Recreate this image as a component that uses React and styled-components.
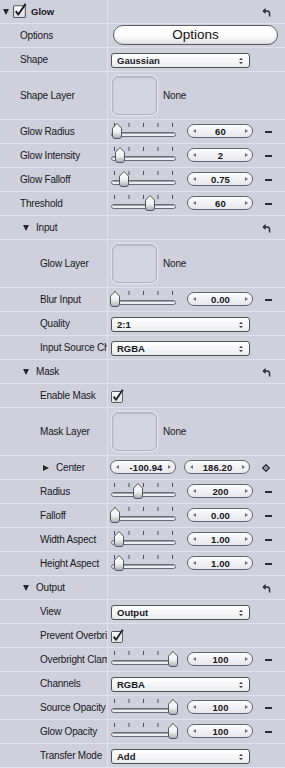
import React, { useId } from "react";
import styled, { createGlobalStyle } from "styled-components";

const GlobalStyle = createGlobalStyle`
  html, body { margin: 0; padding: 0; background: #cfd0db; }
  body { font-family: "Liberation Sans", Arial, sans-serif; }
`;

const Panel = styled.div`
  width: 285px;
  background: #cfd0db;
  color: #18181e;
  font-size: 10px;
  letter-spacing: -0.2px;
`;

const Row = styled.div`
  display: flex;
  height: ${(p) => p.$h || 24}px;
  box-sizing: border-box;
  border-bottom: 1px solid #e2e3ea;
`;

const LabelCell = styled.div`
  width: 108px;
  flex: none;
  box-sizing: border-box;
  border-right: 1px solid #e2e3ea;
  padding-left: ${(p) => p.$indent || 0}px;
  display: flex;
  align-items: center;
  white-space: nowrap;
  overflow: hidden;
`;

const LabelText = styled.span`
  flex: 1;
  min-width: 0;
  overflow: hidden;
  white-space: nowrap;
  text-overflow: clip;
`;

const ControlCell = styled.div`
  flex: 1;
  min-width: 0;
  display: flex;
  align-items: center;
  padding-left: 3px;
`;

const DownTri = styled.span`
  width: 0;
  height: 0;
  flex: none;
  border-left: 3.5px solid transparent;
  border-right: 3.5px solid transparent;
  border-top: 6px solid #26262c;
  margin-right: ${(p) => p.$gap || 7}px;
`;

const RightTri = styled.span`
  width: 0;
  height: 0;
  flex: none;
  border-top: 3.5px solid transparent;
  border-bottom: 3.5px solid transparent;
  border-left: 6px solid #26262c;
  margin-right: 7px;
`;

const HeaderTitle = styled.span`
  font-weight: ${(p) => (p.$bold ? 700 : 400)};
  font-size: ${(p) => (p.$bold ? "9.5px" : "10px")};
  letter-spacing: ${(p) => (p.$bold ? "0" : "-0.2px")};
`;

const ResetWrap = styled.span`
  margin-left: auto;
  margin-right: 14px;
  display: flex;
  margin-top: 2px;
`;

const OptionsButton = styled.div`
  width: 165px;
  height: 20px;
  box-sizing: border-box;
  margin-left: 2px;
  margin-top: -2px;
  border: 1px solid #5e5f68;
  border-radius: 10px;
  background: linear-gradient(#ffffff 0%, #fbfbfb 55%, #e4e4e8 100%);
  box-shadow: inset 0 -1px 1px rgba(0, 0, 0, 0.08);
  display: flex;
  align-items: center;
  justify-content: center;
  font-size: 13.5px;
  letter-spacing: 0;
  color: #111;
`;

const Select = styled.div`
  width: 139px;
  height: 15px;
  box-sizing: border-box;
  margin-top: 2px;
  border: 1px solid #50515a;
  border-radius: 3px;
  background: linear-gradient(#ffffff, #ececf0);
  display: flex;
  align-items: center;
  padding-left: 5px;
  font-weight: 700;
  font-size: 9.5px;
  letter-spacing: 0;
`;

const SelectArrows = styled.span`
  margin-left: auto;
  margin-right: 6px;
  display: flex;
  flex-direction: column;
  gap: 2px;
`;

const UpArrow = styled.span`
  width: 0;
  height: 0;
  border-left: 2px solid transparent;
  border-right: 2px solid transparent;
  border-bottom: 2.5px solid #3a3a40;
`;

const DownArrow = styled.span`
  width: 0;
  height: 0;
  border-left: 2px solid transparent;
  border-right: 2px solid transparent;
  border-top: 2.5px solid #3a3a40;
`;

const Well = styled.div`
  width: 45px;
  height: 39px;
  box-sizing: border-box;
  margin-left: 1px;
  border: 1px solid #b2b3c0;
  border-radius: 6px;
  background: #d4d5df;
  box-shadow: 0 0 0 1.5px #dfe0e8, inset 0 1px 2px rgba(0, 0, 0, 0.12);
`;

const NoneText = styled.span`
  margin-left: 6px;
`;

const Field = styled.div`
  width: 66px;
  height: 14px;
  box-sizing: border-box;
  flex: none;
  margin-left: ${(p) => p.$ml || 0}px;
  margin-top: -1px;
  border: 1px solid #62636c;
  border-radius: 7px;
  background: linear-gradient(#fcfcfd, #e6e6ec);
  display: flex;
  align-items: center;
  padding: 0 4px 0 5px;
`;

const FieldLeft = styled.span`
  width: 0;
  height: 0;
  flex: none;
  border-top: 2.5px solid transparent;
  border-bottom: 2.5px solid transparent;
  border-right: 3.5px solid #6f7078;
`;

const FieldRight = styled.span`
  width: 0;
  height: 0;
  flex: none;
  border-top: 2.5px solid transparent;
  border-bottom: 2.5px solid transparent;
  border-left: 3.5px solid #6f7078;
`;

const FieldValue = styled.span`
  flex: 1;
  min-width: 0;
  overflow: hidden;
  white-space: nowrap;
  text-align: center;
  padding-left: ${(p) => (p.$clip ? "5px" : "0")};
  font-weight: 700;
  font-size: 9.5px;
  letter-spacing: 0.1px;
  color: #15151a;
`;

const Minus = styled.span`
  width: 7px;
  height: 2px;
  margin-left: 12px;
  margin-top: 1px;
  background: #2e2e34;
  flex: none;
`;

const DiamondWrap = styled.span`
  margin-left: 12px;
  display: flex;
`;

const SliderSvg = styled.svg`
  flex: none;
  margin-left: -3px;
  display: block;
`;

const HeaderCheck = styled.span`
  margin-right: 3px;
  margin-top: -2px;
  display: flex;
`;

function ResetIcon() {
  return (
    <svg width="9" height="9" viewBox="0 0 9 9">
      <path d="M3 3 H5 Q7.6 3 7.6 5.6 V8.5" fill="none" stroke="#2c2c32" strokeWidth="1.5" />
      <path d="M0.3 3 L3.6 0 L3.6 6 Z" fill="#2c2c32" />
    </svg>
  );
}

function CheckBox({ size = 11 }) {
  const id = useId();
  return (
    <svg width={size + 3} height={size + 3} viewBox="0 0 14 14" style={{ display: "block", flex: "none" }}>
      <defs>
        <linearGradient id={id} x1="0" y1="0" x2="0" y2="1">
          <stop offset="0" stopColor="#ffffff" />
          <stop offset="1" stopColor="#dcdce2" />
        </linearGradient>
      </defs>
      <rect x="0.5" y="2.5" width="11" height="11" rx="1" fill={`url(#${id})`} stroke="#55565e" />
      <path d="M2.6 7.6 L5 10.8 L11.8 0.8" fill="none" stroke="#1e1e24" strokeWidth="1.8" strokeLinejoin="round" />
    </svg>
  );
}

function Diamond() {
  return (
    <svg width="8" height="8" viewBox="0 0 8 8">
      <path d="M4 0.8 L7.2 4 L4 7.2 L0.8 4 Z" fill="none" stroke="#2e2e34" strokeWidth="1.4" />
      <circle cx="4" cy="4" r="0.8" fill="#2e2e34" />
    </svg>
  );
}

function Slider({ knob }) {
  const id = useId();
  const kx = knob - 108;
  const ticks = [6.5, 21, 35.5, 50, 64.5];
  return (
    <SliderSvg width="76" height="23" viewBox="0 0 76 23">
      <defs>
        <linearGradient id={id} x1="0" y1="0" x2="0" y2="1">
          <stop offset="0" stopColor="#ffffff" />
          <stop offset="0.55" stopColor="#f0f0f3" />
          <stop offset="1" stopColor="#a9aab3" />
        </linearGradient>
      </defs>
      {ticks.map((t) => (
        <line key={t} x1={t} y1="3" x2={t} y2="7" stroke="#4b4c54" strokeWidth="1" />
      ))}
      <rect x="3.5" y="12.5" width="64" height="4" rx="2" fill="#ececf1" stroke="#6a6b76" />
      <line x1="5" y1="13.5" x2="66" y2="13.5" stroke="#9fa0aa" strokeWidth="1" />
      <g transform={`translate(${kx} 3)`}>
        <path
          d="M5 0.5 L9.5 5.2 L9.5 13 Q9.5 15.5 7 15.5 L3 15.5 Q0.5 15.5 0.5 13 L0.5 5.2 Z"
          fill={`url(#${id})`}
          stroke="#55565f"
          strokeWidth="1"
        />
      </g>
    </SliderSvg>
  );
}

function ValueField({ value, ml, clip }) {
  return (
    <Field $ml={ml}>
      <FieldLeft />
      <FieldValue $clip={clip}>{value}</FieldValue>
      <FieldRight />
    </Field>
  );
}

function SliderRow({ label, indent, knob, value }) {
  return (
    <Row>
      <LabelCell $indent={indent}>
        <LabelText>{label}</LabelText>
      </LabelCell>
      <ControlCell>
        <Slider knob={knob} />
        <ValueField value={value} ml={3} />
        <Minus />
      </ControlCell>
    </Row>
  );
}

function SelectRow({ label, indent, value }) {
  return (
    <Row>
      <LabelCell $indent={indent}>
        <LabelText>{label}</LabelText>
      </LabelCell>
      <ControlCell>
        <Select>
          {value}
          <SelectArrows>
            <UpArrow />
            <DownArrow />
          </SelectArrows>
        </Select>
      </ControlCell>
    </Row>
  );
}

function LayerRow({ label, indent }) {
  return (
    <Row $h={48}>
      <LabelCell $indent={indent}>
        <LabelText>{label}</LabelText>
      </LabelCell>
      <ControlCell>
        <Well />
        <NoneText>None</NoneText>
      </ControlCell>
    </Row>
  );
}

function GroupHeader({ label }) {
  return (
    <Row>
      <LabelCell $indent={23}>
        <DownTri $gap={7} />
        <HeaderTitle>{label}</HeaderTitle>
      </LabelCell>
      <ControlCell>
        <ResetWrap>
          <ResetIcon />
        </ResetWrap>
      </ControlCell>
    </Row>
  );
}

function CheckRow({ label, indent }) {
  return (
    <Row>
      <LabelCell $indent={indent}>
        <LabelText>{label}</LabelText>
      </LabelCell>
      <ControlCell>
        <CheckBox />
      </ControlCell>
    </Row>
  );
}

export default function App() {
  return (
    <>
      <GlobalStyle />
      <Panel>
        <Row>
          <LabelCell $indent={3}>
            <DownTri $gap={4} />
            <HeaderCheck>
              <CheckBox size={12} />
            </HeaderCheck>
            <HeaderTitle $bold>Glow</HeaderTitle>
          </LabelCell>
          <ControlCell>
            <ResetWrap>
              <ResetIcon />
            </ResetWrap>
          </ControlCell>
        </Row>
        <Row>
          <LabelCell $indent={20}>
            <LabelText>Options</LabelText>
          </LabelCell>
          <ControlCell>
            <OptionsButton>Options</OptionsButton>
          </ControlCell>
        </Row>
        <SelectRow label="Shape" indent={20} value="Gaussian" />
        <LayerRow label="Shape Layer" indent={20} />
        <SliderRow label="Glow Radius" indent={20} knob={112} value="60" />
        <SliderRow label="Glow Intensity" indent={20} knob={115} value="2" />
        <SliderRow label="Glow Falloff" indent={20} knob={119} value="0.75" />
        <SliderRow label="Threshold" indent={20} knob={145} value="60" />

        <GroupHeader label="Input" />
        <LayerRow label="Glow Layer" indent={40} />
        <SliderRow label="Blur Input" indent={40} knob={110} value="0.00" />
        <SelectRow label="Quality" indent={40} value="2:1" />
        <SelectRow label="Input Source Channels" indent={40} value="RGBA" />

        <GroupHeader label="Mask" />
        <CheckRow label="Enable Mask" indent={40} />
        <LayerRow label="Mask Layer" indent={40} />
        <Row>
          <LabelCell $indent={43}>
            <RightTri />
            <LabelText>Center</LabelText>
          </LabelCell>
          <ControlCell>
            <ValueField value="-100.94" ml={-1} clip />
            <ValueField value="186.20" ml={8} />
            <DiamondWrap>
              <Diamond />
            </DiamondWrap>
          </ControlCell>
        </Row>
        <SliderRow label="Radius" indent={40} knob={133} value="200" />
        <SliderRow label="Falloff" indent={40} knob={110} value="0.00" />
        <SliderRow label="Width Aspect" indent={40} knob={114} value="1.00" />
        <SliderRow label="Height Aspect" indent={40} knob={114} value="1.00" />

        <GroupHeader label="Output" />
        <SelectRow label="View" indent={40} value="Output" />
        <CheckRow label="Prevent Overbrights" indent={40} />
        <SliderRow label="Overbright Clamp" indent={40} knob={168} value="100" />
        <SelectRow label="Channels" indent={40} value="RGBA" />
        <SliderRow label="Source Opacity" indent={40} knob={168} value="100" />
        <SliderRow label="Glow Opacity" indent={40} knob={168} value="100" />
        <SelectRow label="Transfer Mode" indent={40} value="Add" />
      </Panel>
    </>
  );
}
